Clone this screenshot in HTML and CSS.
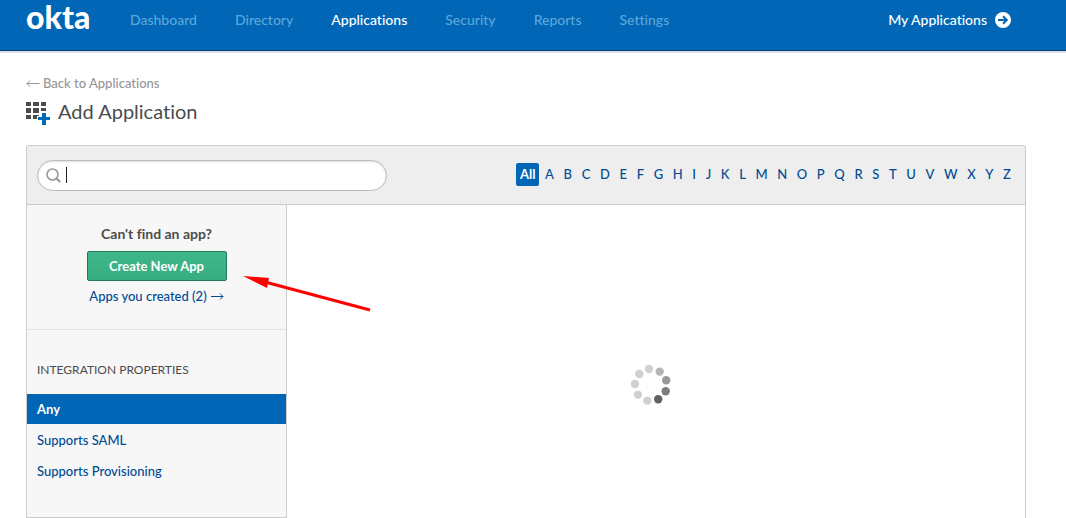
FILE: index.html
```
<!DOCTYPE html>
<html lang="en">
<head>
    <meta charset="UTF-8">
    <meta name="viewport" content="width=device-width, initial-scale=1.0">
    <title>Add Application</title>
    <link rel="stylesheet" href="styles.css">
</head>
<body>

    <header class="header">
        <a class="logo" href="#">okta</a>
        <nav class="nav">
            <a href="#">Dashboard</a>
            <a href="#">Directory</a>
            <a href="#" class="active">Applications</a>
            <a href="#">Security</a>
            <a href="#">Reports</a>
            <a href="#">Settings</a>
        </nav>
        <a class="my-apps" href="#">
            My Applications
            <svg width="16" height="16" viewBox="0 0 16 16">
                <circle cx="8" cy="8" r="8" fill="#fff"/>
                <path d="M3 8h8M8 4.2L11.8 8L8 11.8" fill="none" stroke="#0066b5" stroke-width="2"/>
            </svg>
        </a>
    </header>

    <main class="content">
        <a class="back" href="#">
            <svg width="14" height="9" viewBox="0 0 14 9">
                <path d="M13.5 4.5H1M4 1.5L1 4.5L4 7.5" fill="none" stroke="currentColor"/>
            </svg>
            Back to Applications
        </a>
        <h1 class="title">
            <svg width="24" height="30" viewBox="0 -6 24 30">
                <path d="M0 0h5v4H0zM7 0h6v4H7zM15 0h5v4h-5zM0 6h5v5H0zM7 6h6v5H7zM15 6h5v5h-5zM0 13h5v4H0zM7 13h6v4H7z" fill="#4c4c4c"/>
                <path d="M15 9h6v5h4v6h-4v4h-6v-4h-4v-6h4z" fill="#fff"/>
                <path d="M16 11h4v4h4v3h-4v5h-4v-5h-4v-3h4z" fill="#0069b8"/>
            </svg>
            Add Application
        </h1>

        <div class="panel">
            <div class="toolbar">
                <div class="search">
                    <svg width="16" height="16" viewBox="0 0 16 16">
                        <circle cx="6.5" cy="6.5" r="5.5" fill="none" stroke="#999" stroke-width="1.6"/>
                        <path d="M10.5 10.5L14.2 14" stroke="#999" stroke-width="2.4"/>
                    </svg>
                    <input type="text" aria-label="Search applications">
                    <span class="caret"></span>
                </div>
                <nav class="letters">
                    <a href="#" class="active">All</a>
                    <a href="#">A</a>
                    <a href="#">B</a>
                    <a href="#">C</a>
                    <a href="#">D</a>
                    <a href="#">E</a>
                    <a href="#">F</a>
                    <a href="#">G</a>
                    <a href="#">H</a>
                    <a href="#">I</a>
                    <a href="#">J</a>
                    <a href="#">K</a>
                    <a href="#">L</a>
                    <a href="#">M</a>
                    <a href="#">N</a>
                    <a href="#">O</a>
                    <a href="#">P</a>
                    <a href="#">Q</a>
                    <a href="#">R</a>
                    <a href="#">S</a>
                    <a href="#">T</a>
                    <a href="#">U</a>
                    <a href="#">V</a>
                    <a href="#">W</a>
                    <a href="#">X</a>
                    <a href="#">Y</a>
                    <a href="#">Z</a>
                </nav>
            </div>

            <div class="columns">
                <aside class="sidebar">
                    <div class="create">
                        <p>Can't find an app?</p>
                        <button type="button">Create New App</button>
                        <a href="#">
                            Apps you created (2)
                            <svg width="13" height="9" viewBox="0 0 13 9">
                                <path d="M0 4.5H12M9 1.5L12 4.5L9 7.5" fill="none" stroke="currentColor"/>
                            </svg>
                        </a>
                    </div>
                    <h2>INTEGRATION PROPERTIES</h2>
                    <ul class="filters">
                        <li><a href="#" class="active">Any</a></li>
                        <li><a href="#">Supports SAML</a></li>
                        <li><a href="#">Supports Provisioning</a></li>
                    </ul>
                    <!-- Arrow pointing at the create button -->
                    <svg class="pointer" width="130" height="40" viewBox="0 0 130 40">
                        <path d="M22 6L127 34" stroke="#f00" stroke-width="3"/>
                        <path d="M0 0L26 2L24 12z" fill="#f00"/>
                    </svg>
                </aside>
                <section class="results">
                    <!-- Loading spinner -->
                    <svg width="42" height="42" viewBox="0 0 42 42">
                        <g fill="#d0d0d0">
                            <circle cx="19" cy="5" r="4.2"/>
                            <circle cx="9.3" cy="10" r="4.2"/>
                            <circle cx="5" cy="20" r="4.2"/>
                            <circle cx="8" cy="30.6" r="4.2"/>
                            <circle cx="17.3" cy="36.6" r="4.2"/>
                        </g>
                        <circle cx="29.7" cy="7.6" r="4.2" fill="#b5b5b5"/>
                        <circle cx="36.2" cy="16.3" r="4.2" fill="#999"/>
                        <circle cx="35.7" cy="27.2" r="4.2" fill="#7c7c7c"/>
                        <circle cx="28.2" cy="35.2" r="4.2" fill="#626262"/>
                    </svg>
                </section>
            </div>
        </div>
    </main>

</body>
</html>
```
FILE: styles.css
```
* {
    box-sizing: border-box;
}

body {
    margin: 0;
    min-height: 100vh;
    display: flex;
    flex-direction: column;
    font-family: Lato, "Open Sans", sans-serif;
    font-size: 13px;
    font-weight: 500;
    font-variant-ligatures: none;
    line-height: 20px;
    color: #4c4c4c;
    background: #fff;
}

a {
    color: #004b93;
    text-decoration: none;
}

/* Header */
.header {
    display: flex;
    align-items: flex-start;
    height: 51px;
    padding: 0 55px 0 26px;
    background: #0066b5;
    border-bottom: 1px solid #003f78;
    box-shadow: 0 2px 0 #dcdfe2;
}

.logo {
    width: 104px;
    font-size: 32px;
    font-weight: 900;
    line-height: 34px;
    color: #fff;
}

.nav {
    display: flex;
    flex: 1;
    gap: 38px;
    padding-top: 10px;
    font-size: 14px;
}

.nav a {
    color: #5ba7dc;
}

.nav .active {
    color: #fff;
}

.my-apps {
    display: flex;
    align-items: center;
    gap: 8px;
    padding-top: 10px;
    font-size: 14px;
    color: #fff;
}

/* Content */
.content {
    display: flex;
    flex: 1;
    flex-direction: column;
    padding: 22px 40px 0 26px;
}

.back {
    display: flex;
    align-items: center;
    gap: 3px;
    color: #959595;
}

.title {
    display: flex;
    align-items: center;
    gap: 8px;
    margin: 3px 0 19px;
    font-size: 20px;
    font-weight: 400;
    line-height: 30px;
}

.panel {
    display: flex;
    flex: 1;
    flex-direction: column;
    border: 1px solid #ccc;
    border-bottom: 0;
    border-radius: 3px 3px 0 0;
}

.toolbar {
    display: flex;
    justify-content: space-between;
    padding: 14px 10px 13px;
    background: #eee;
    border-bottom: 1px solid #ccc;
    border-radius: 3px 3px 0 0;
}

.search {
    position: relative;
    width: 350px;
}

.search svg {
    position: absolute;
    top: 8px;
    left: 9px;
}

.search input {
    display: block;
    width: 100%;
    height: 31px;
    padding: 0 16px 0 30px;
    font: inherit;
    border: 1px solid #bbb;
    border-radius: 16px;
    outline: 0;
    box-shadow: inset 0 1px 2px #ddd;
}

.caret {
    position: absolute;
    top: 7px;
    left: 29px;
    width: 1px;
    height: 16px;
    background: #222;
}

.letters {
    display: flex;
    justify-content: space-between;
    align-items: flex-start;
    width: 499px;
    padding-top: 3px;
}

.letters a {
    padding: 0 4px;
    line-height: 22px;
}

.letters .active {
    padding-bottom: 1px;
    font-weight: 700;
    color: #fff;
    background: #0066b5;
    border-radius: 2px;
}

.columns {
    display: flex;
    flex: 1;
    align-items: flex-start;
}

/* Sidebar */
.sidebar {
    position: relative;
    width: 260px;
    padding-bottom: 30px;
    background: #f7f7f7;
    border-right: 1px solid #ccc;
    border-bottom: 1px solid #ccc;
}

.create {
    display: flex;
    flex-direction: column;
    align-items: center;
    padding: 19px 0 23px;
    border-bottom: 1px solid #e1e1e1;
}

.create p {
    margin: 0 0 7px;
    font-size: 14px;
    font-weight: 700;
}

.create button {
    width: 140px;
    height: 30px;
    margin-bottom: 5px;
    padding: 0;
    font: inherit;
    font-weight: 700;
    color: #fff;
    background: linear-gradient(#3eb88b, #36ad80);
    border: 1px solid #217a58;
    border-radius: 2px;
}

.create a {
    display: flex;
    align-items: center;
    gap: 4px;
}

.sidebar h2 {
    margin: 30px 10px 14px;
    font-size: 12px;
    font-weight: 400;
}

.filters {
    margin: 0;
    padding: 0;
    list-style: none;
}

.filters a {
    display: block;
    padding: 5px 10px;
    margin-bottom: 1px;
}

.filters .active {
    font-weight: 700;
    color: #fff;
    background: #0066b5;
}

.pointer {
    position: absolute;
    top: 71px;
    left: 216px;
}

/* Results */
.results {
    display: flex;
    flex: 1;
    justify-content: center;
    padding: 159px 10px 0 0;
}
```
